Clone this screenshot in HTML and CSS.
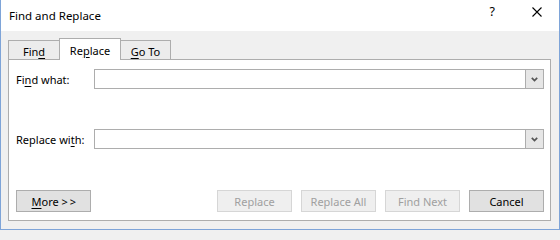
FILE: index.html
```html
<!DOCTYPE html>
<html>
<head>
<meta charset="utf-8">
<link rel="stylesheet" href="styles.css">
</head>
<body>
<div class="window">
  <div class="titlebar">
    <span class="title">Find and Replace</span>
    <div class="caption-btns">
      <span class="help">?</span>
      <svg class="close" width="10" height="10" viewBox="0 0 10 10"><path d="M0.5 0.5 L9.5 9.5 M9.5 0.5 L0.5 9.5" stroke="#000" stroke-width="1.1" fill="none"/></svg>
    </div>
  </div>
  <div class="client">
    <div class="tabs">
      <div class="tab tab-find">Fin<u>d</u></div>
      <div class="tab tab-replace selected">Re<u>p</u>lace</div>
      <div class="tab tab-goto"><u>G</u>o To</div>
    </div>
    <div class="panel">
      <div class="row">
        <label class="label">Fi<u>n</u>d what:</label>
        <div class="combo">
          <div class="combo-text"></div>
          <div class="combo-btn"><svg width="7" height="5" viewBox="0 0 7 5"><path d="M0.8 0.8 L3.5 3.6 L6.2 0.8" stroke="#555" stroke-width="1.7" fill="none"/></svg></div>
        </div>
      </div>
      <div class="row row-replace">
        <label class="label">Replace wi<u>t</u>h:</label>
        <div class="combo">
          <div class="combo-text"></div>
          <div class="combo-btn"><svg width="7" height="5" viewBox="0 0 7 5"><path d="M0.8 0.8 L3.5 3.6 L6.2 0.8" stroke="#555" stroke-width="1.7" fill="none"/></svg></div>
        </div>
      </div>
      <div class="buttons">
        <button class="btn"><u>M</u>ore <span class="arrows">&gt; &gt;</span></button>
        <div class="spacer"></div>
        <button class="btn disabled">Replace</button>
        <button class="btn disabled">Replace All</button>
        <button class="btn disabled">Find Next</button>
        <button class="btn">Cancel</button>
      </div>
    </div>
  </div>
</div>
</body>
</html>
```
FILE: styles.css
```css
html, body {
  margin: 0;
  padding: 0;
  background: #f0f0f0;
}
body {
  font-family: "Noto Sans", "DejaVu Sans", sans-serif;
  font-size: 11px;
  color: #000;
}
u {
  text-decoration: underline;
  text-underline-offset: 2px;
}
.window {
  width: 560px;
  height: 230px;
  box-sizing: border-box;
  border: 1px solid #7ea4d8;
  border-top: none;
  background: #f0f0f0;
  display: flex;
  flex-direction: column;
}
.titlebar {
  height: 31px;
  background: #fff;
  display: flex;
  align-items: center;
  padding-left: 8px;
  padding-right: 17px;
  flex-shrink: 0;
}
.title {
  font-size: 11.5px;
  color: #000;
  flex: 1;
}
.caption-btns {
  display: flex;
  align-items: center;
  gap: 37px;
  align-self: flex-start;
  margin-top: 7px;
}
.help {
  font-size: 12.5px;
  line-height: 10px;
  height: 10px;
}
.close {
  display: block;
}
.client {
  flex: 1;
  display: flex;
  flex-direction: column;
  padding: 7px 8px 8px 7px;
}
.tabs {
  display: flex;
  align-items: flex-end;
  height: 22px;
  position: relative;
  z-index: 1;
  margin-bottom: -1px;
}
.tab {
  box-sizing: border-box;
  border: 1px solid #adadad;
  border-bottom: none;
  background: #ececec;
  height: 19px;
  margin-bottom: 1px;
  display: flex;
  align-items: center;
  justify-content: center;
  padding-top: 3px;
}
.tab-find {
  width: 52px;
}
.tab-replace {
  width: 62px;
  margin-left: -1px;
}
.tab-goto {
  width: 51px;
  margin-left: -1px;
}
.tab.selected {
  background: #fff;
  height: 22px;
  margin-bottom: 0;
  padding-top: 1px;
  position: relative;
  z-index: 2;
}
.panel {
  flex: 1;
  background: #fff;
  border: 1px solid #adadad;
  display: flex;
  flex-direction: column;
  padding: 9px 6px 8px 7px;
}
.row {
  display: flex;
  align-items: center;
  height: 20px;
}
.row-replace {
  margin-top: 40px;
}
.label {
  width: 78px;
  flex-shrink: 0;
}
.combo {
  flex: 1;
  height: 20px;
  box-sizing: border-box;
  border: 1px solid #adadad;
  display: flex;
  background: #fff;
}
.combo-text {
  flex: 1;
}
.combo-btn {
  width: 17px;
  border-left: 1px solid #adadad;
  background: #e6e6e6;
  display: flex;
  align-items: center;
  justify-content: center;
}
.buttons {
  margin-top: auto;
  display: flex;
  gap: 9px;
}
.spacer {
  flex: 1;
}
.btn {
  width: 75px;
  height: 22px;
  box-sizing: border-box;
  border: 1px solid #adadad;
  background: #e1e1e1;
  font-family: inherit;
  font-size: 11px;
  color: #000;
  padding: 0;
  margin: 0;
}
.arrows {
  letter-spacing: -0.5px;
}
.btn.disabled {
  background: #efefef;
  border-color: #d6d6d6;
  color: #a0a0a0;
}
```
